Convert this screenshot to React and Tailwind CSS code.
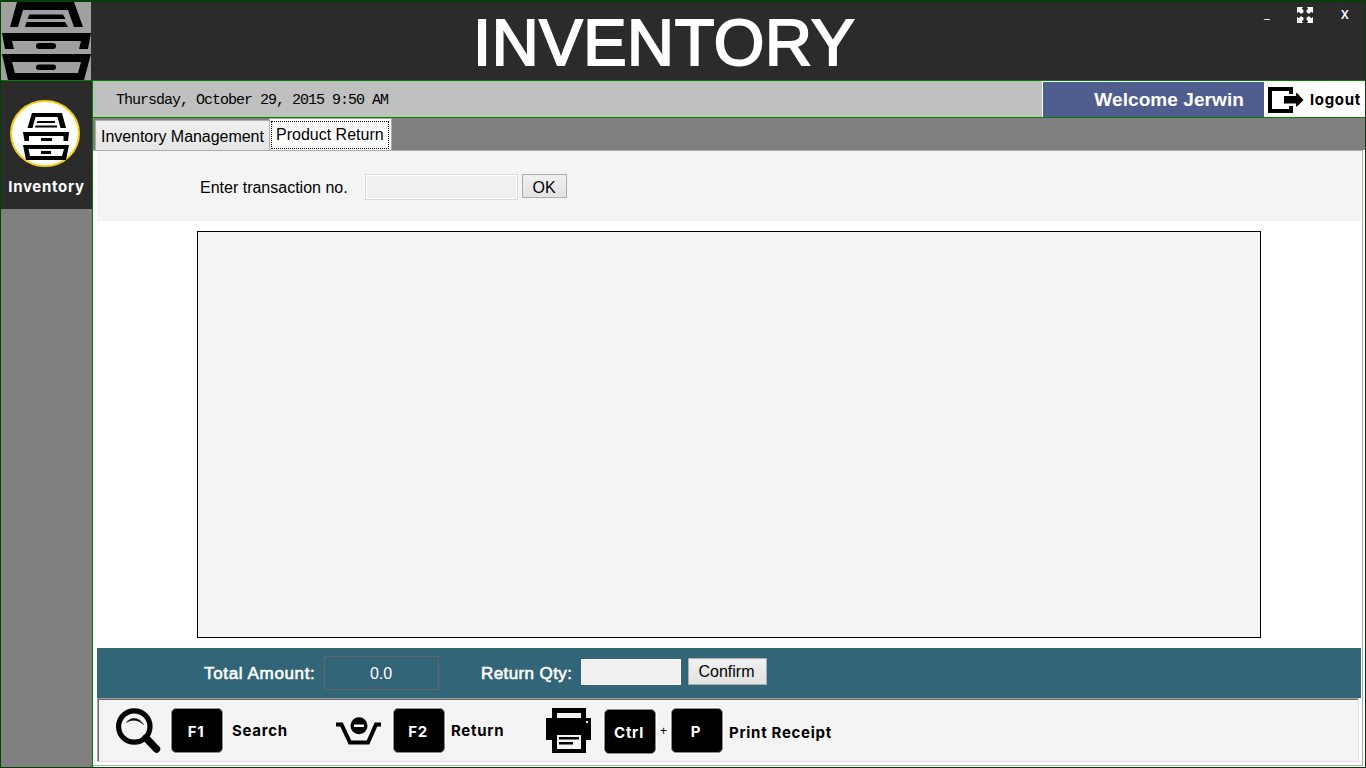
import React from "react";

const boldLabel =
  "whitespace-nowrap font-['Inter','Liberation_Sans',sans-serif] text-[15px] leading-[18px] font-bold tracking-[0.700px]";
const strongLabel =
  "whitespace-nowrap text-[17px] leading-5 tracking-[0.650px] text-white [-webkit-text-stroke:0.6px_white]";
const button =
  "border border-[#acacac] bg-linear-to-b from-[#f0f0f0] to-[#e3e3e3] text-center text-[16px]";

function CabinetLogo() {
  return (
    <svg className="block h-[78px] w-[90px] bg-[#a0a0a0]" viewBox="0 0 90 78">
      <path fill="#000" fillRule="evenodd" d="M16 0H73L82 25H73L67 8H22L17 25H9Z" />
      <path fill="#000" d="M28.500 12.500H62L64.500 17H26.500ZM25.500 20H64L67 25H24Z" />
      <path fill="#000" fillRule="evenodd" d="M1 31H90L87 47H78L80 39H11L13 47H4Z" />
      <path fill="#000" fillRule="evenodd" d="M1 52H90L83 78H7ZM11 60L14 71H77L80 60Z" />
      <rect x="35" y="41" width="20" height="6" rx="3" />
      <rect x="35" y="62.500" width="20" height="5.500" rx="2.700" />
    </svg>
  );
}

function CabinetBadge() {
  return (
    <svg className="block" width="70" height="67" viewBox="0 0 70 67">
      <ellipse cx="35" cy="33.500" rx="34" ry="32.500" fill="#fff" stroke="#f5cf18" strokeWidth="2" />
      <path d="M22 13H52L56 28H50.500L47.500 17H25.500L22.500 28H17.500Z" />
      <path d="M27.500 21H45V23H26.500ZM25.500 25.500H47V27.500H25Z" />
      <path d="M13 32H59L58 41H53.500V36H19V41H14.500ZM31 38H42V41H31Z" />
      <path fillRule="evenodd" d="M13 45H59L56 60H16ZM18.500 49L20 56H52L54 49ZM31 51H41V54H31Z" />
    </svg>
  );
}

function ExpandIcon() {
  return (
    <svg className="block" width="16" height="16" viewBox="0 0 16 16" fill="#fff">
      <path d="M0 0H6L4.800 1.800L6.500 3.500V5L5 6.500H3.500L1.800 4.800L0 6Z" />
      <path d="M16 0H10L11.200 1.800L9.500 3.500V5L11 6.500H12.500L14.200 4.800L16 6Z" />
      <path d="M0 16H6L4.800 14.200L6.500 12.500V11L5 9.500H3.500L1.800 11.200L0 10Z" />
      <path d="M16 16H10L11.200 14.200L9.500 12.500V11L11 9.500H12.500L14.200 11.200L16 10Z" />
    </svg>
  );
}

function LogoutIcon() {
  return (
    <svg className="block" width="36" height="27" viewBox="0 0 36 27">
      <path d="M0 0H25V7H21V4H4V22H21V19H25V26H0Z" />
      <path d="M16 9H28V6H29L35.500 13L29 19.500H28V16.500H16Z" />
    </svg>
  );
}

function SearchIcon() {
  return (
    <svg className="block" width="45" height="46" viewBox="0 0 45 46" fill="none" stroke="#000">
      <circle cx="18.300" cy="18.500" r="15.700" strokeWidth="5.200" />
      <path d="M30 30L40.500 41" strokeWidth="7.500" strokeLinecap="round" />
      <path d="M10.500 14.500C15 8.500 23 9 27.500 16.500C22 11.500 16 11 10.500 14.500Z" fill="#000" strokeWidth="0.500" />
    </svg>
  );
}

function ReturnIcon() {
  return (
    <svg className="block" width="46" height="29" viewBox="0 0 46 29">
      <path d="M0 7.500H5.500L14 25.500H32L40 7.500H45" fill="none" stroke="#000" strokeWidth="4" />
      <circle cx="23" cy="8.800" r="8.500" />
      <path d="M18 7.500H28V10H18Z" fill="#fff" />
    </svg>
  );
}

function PrinterIcon() {
  return (
    <svg className="block" width="45" height="45" viewBox="0 0 45 45">
      <path
        fillRule="evenodd"
        d="M6 0H40V10H45V32H40V45H6V32H0V10H6ZM11 5V10H35V5ZM40 13V15H42V13ZM11 27V41H35V27Z"
      />
      <path d="M13 29H33V31.500H13ZM13 34H27V36.500H13Z" />
    </svg>
  );
}

function Key({ children }) {
  return (
    <div
      className={
        "flex h-[45px] w-[52px] shrink-0 items-center justify-center rounded-[5px] border border-[#8a8a8a] bg-black pr-[2px] pt-[2px] text-white shadow-[0_0_0_1px_#ffffff] " +
        boldLabel
      }
    >
      {children}
    </div>
  );
}

function Header() {
  return (
    <header className="flex h-[79px] shrink-0 border-b border-[#008000] bg-[#2b2b2b] text-white">
      <CabinetLogo />
      <h1 className="ml-[382px] mt-[3px] w-[791px] whitespace-nowrap text-[65px] leading-[75px] tracking-[0.600px] [-webkit-text-stroke:2px_white]">
        INVENTORY
      </h1>
      <div className="flex font-['Noto_Sans'] text-[13px]">
        <span className="mt-[2px] w-[33px] leading-[18px]">_</span>
        <div className="mt-[5px] w-[44px]">
          <ExpandIcon />
        </div>
        <span className="mt-[3px] text-[12px] font-semibold leading-[20px]">X</span>
      </div>
    </header>
  );
}

function Sidebar() {
  return (
    <aside className="w-[92px] shrink-0 border-r border-[#008000] bg-[#808080]">
      <div className="flex h-[128px] flex-col items-center bg-[#2b2b2b] pt-[19px] text-white">
        <div className="mr-[3px]">
          <CabinetBadge />
        </div>
        <span className={"mt-[11px] " + boldLabel}>Inventory</span>
      </div>
    </aside>
  );
}

function StatusBar() {
  return (
    <div className="flex h-[37px] shrink-0 border-b border-[#008000] bg-[#c0c0c0]">
      <div className="flex-1 pl-[23px] pt-[10px] font-['Liberation_Mono',monospace] text-[15px] leading-[20px] tracking-[-1px]">
        Thursday, October 29, 2015 9:50 AM
      </div>
      <div className="w-[222px] border-l border-t border-white bg-[#505d8f] pr-[20px] pt-[6px] text-right text-[19px] font-bold leading-6 tracking-[0.080px] text-white">
        Welcome Jerwin
      </div>
      <div className="flex w-[101px] bg-white pl-[4px]">
        <div className="mt-[6px]">
          <LogoutIcon />
        </div>
        <span className={"ml-[6px] mt-[10px] " + boldLabel}>logout</span>
      </div>
    </div>
  );
}

function Tabs() {
  return (
    <div className="flex h-[32px] shrink-0 items-end bg-[#808080] pl-[2px] text-[16px]">
      <div className="h-[30px] w-[174px] border-l border-t border-[#acacac] bg-linear-to-b from-[#f0f0f0] to-[#e5e5e5] pl-[5px] pt-[5px] leading-[22px] tracking-[-0.040px]">
        Inventory Management
      </div>
      <div className="h-[32px] w-[123px] border-x border-t border-[#acacac] bg-white pl-px pr-[2px] pt-[2px]">
        <div className="h-[28px] border border-dotted border-black pl-[4px] pt-[2px] leading-[22px]">
          Product Return
        </div>
      </div>
    </div>
  );
}

function ReturnPanel() {
  return (
    <main className="flex flex-1 flex-col border-b border-r border-t border-[#acacac] bg-white pl-[4px] pr-px">
      <section className="flex h-[70px] shrink-0 bg-[#f4f4f4] pl-[103px] text-[16px]">
        <label className="mt-[26px] w-[165px] leading-[22px]">Enter transaction no.</label>
        <div className="mt-[23px] h-[26px] w-[153px] border border-[#d9d9d9] bg-[#f0f0f0] shadow-[inset_0_0_0_1px_#ffffff]" />
        <button className={"ml-[4px] mt-[23px] h-[24px] w-[45px] pr-px leading-[25px] " + button}>OK</button>
      </section>
      <div className="ml-[100px] mt-[10px] h-[407px] w-[1064px] shrink-0 border border-black bg-[#f4f4f4]" />
      <section className="mt-[10px] flex h-[50px] shrink-0 bg-[#316577] pl-[107px]">
        <label className={"mt-[16px] w-[120px] " + strongLabel}>Total Amount:</label>
        <div className="mt-[8px] h-[34px] w-[115px] border border-[#646464] pr-px text-center text-[16px] leading-[33px] text-white">
          0.0
        </div>
        <label className={"ml-[42px] mt-[16px] w-[100px] " + strongLabel}>
          <span className="tracking-[0.400px]">Return Qty:</span>
        </label>
        <div className="mt-[11px] h-[26px] w-[100px] border border-white bg-[#f0f0f0]" />
        <button className={"ml-[7px] mt-[10px] h-[27px] w-[79px] pr-[2px] leading-[24px] " + button}>Confirm</button>
      </section>
      <footer className="mr-[2px] flex h-[64px] shrink-0 border border-b-[#e0e0e0] border-l-[#a0a0a0] border-r-[#e0e0e0] border-t-[#a0a0a0] bg-[#f4f4f4] pl-[18px] shadow-[inset_1px_1px_0_#696969]">
        <div className="mt-[9px] w-[55px]">
          <SearchIcon />
        </div>
        <div className="mt-[9px] w-[61px]">
          <Key>F1</Key>
        </div>
        <span className={"mt-[23px] w-[104px] " + boldLabel}>Search</span>
        <div className="mt-[18px] w-[57px]">
          <ReturnIcon />
        </div>
        <div className="mt-[9px] w-[58px]">
          <Key>F2</Key>
        </div>
        <span className={"mt-[23px] w-[95px] " + boldLabel}>Return</span>
        <div className="mt-[9px] w-[58px]">
          <PrinterIcon />
        </div>
        <div className="mt-[10px]">
          <Key>Ctrl</Key>
        </div>
        <span className="mt-[22px] w-[15px] text-center text-[12px] leading-[20px]">+</span>
        <div className="mt-[9px] w-[58px]">
          <Key>P</Key>
        </div>
        <span className={"mt-[25px] " + boldLabel}>Print Receipt</span>
      </footer>
    </main>
  );
}

export default function App() {
  return (
    <div className="flex h-[768px] w-[1366px] flex-col overflow-hidden border border-t-2 border-[#044004] bg-white font-['Liberation_Sans',sans-serif] text-black">
      <Header />
      <div className="flex min-h-0 flex-1">
        <Sidebar />
        <div className="flex min-w-0 flex-1 flex-col">
          <StatusBar />
          <Tabs />
          <div className="flex flex-1 border-l border-[#c8c8c8] pr-[2px] pb-px">
            <div className="-ml-px flex flex-1">
              <ReturnPanel />
            </div>
          </div>
        </div>
      </div>
    </div>
  );
}
